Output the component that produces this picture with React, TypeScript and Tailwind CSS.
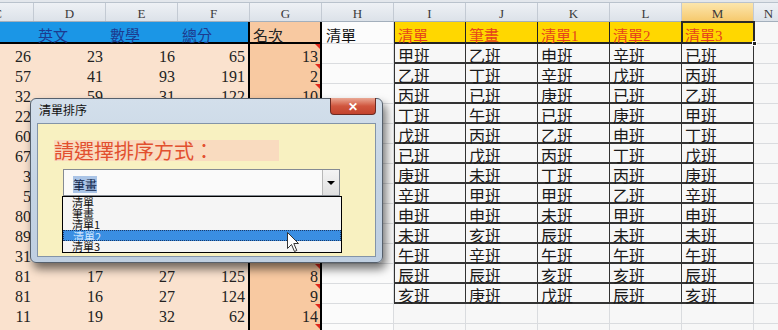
import React from "react";

const COLS = ["C", "D", "E", "F", "G", "H", "I", "J", "K", "L", "M", "N"];

// C, D, E, F(總分), G(名次); null = hidden under the dialog
const scores: (number | null)[][] = [
  [26, 23, 16, 65, 13],
  [57, 41, 93, 191, 2],
  [32, 59, 31, 122, 10],
  [22, null, null, null, null],
  [60, null, null, null, null],
  [67, null, null, null, null],
  [3, null, null, null, null],
  [5, null, null, null, null],
  [80, null, null, null, null],
  [89, null, null, null, null],
  [31, null, null, null, null],
  [81, 17, 27, 125, 8],
  [81, 16, 27, 124, 9],
  [11, 19, 32, 62, 14],
];

const lists: string[][] = [
  ["甲班", "乙班", "申班", "辛班", "已班"],
  ["乙班", "丁班", "辛班", "戊班", "丙班"],
  ["丙班", "已班", "庚班", "已班", "乙班"],
  ["丁班", "午班", "已班", "庚班", "甲班"],
  ["戊班", "丙班", "乙班", "申班", "丁班"],
  ["已班", "戊班", "丙班", "丁班", "戊班"],
  ["庚班", "未班", "丁班", "丙班", "庚班"],
  ["辛班", "甲班", "甲班", "乙班", "辛班"],
  ["申班", "申班", "未班", "甲班", "申班"],
  ["未班", "亥班", "辰班", "未班", "未班"],
  ["午班", "辛班", "午班", "午班", "午班"],
  ["辰班", "辰班", "亥班", "亥班", "辰班"],
  ["亥班", "庚班", "戊班", "辰班", "亥班"],
];

const listHeads = ["清單", "筆畫", "清單1", "清單2", "清單3"];
const options = ["清單", "筆畫", "清單1", "清單2", "清單3"];

function ColumnHeader() {
  return (
    <div className="flex h-[19px] border-b border-[#a3afbc]">
      {COLS.map((c) => (
        <div
          key={c}
          className={`shrink-0 border-r border-[#c3cad3] text-center text-[13px] leading-[22px] text-[#3a3a3a] ${
            c === "N" ? "w-[30px]" : "w-[72px]"
          } ${c === "M" ? "bg-gradient-to-b from-[#fce6ac] to-[#f6c96c]" : "bg-gradient-to-b from-[#eef1f5] to-[#dce2e9]"}`}
        >
          {c}
        </div>
      ))}
      <div className="w-[72px] shrink-0 bg-gradient-to-b from-[#eef1f5] to-[#dce2e9]" />
    </div>
  );
}

function TitleRow() {
  return (
    <div className="flex h-[22px] text-[15px] leading-[28px]">
      <div className="w-[72px] shrink-0 border-b-2 border-black bg-[#1b96e6]" />
      {["英文", "數學", "總分"].map((t, i) => (
        <div
          key={t}
          className={`w-[72px] shrink-0 border-b-2 border-black bg-[#1b96e6] pl-[4px] text-[#1d3b8f] ${i === 2 ? "border-r-2" : ""}`}
        >
          {t}
        </div>
      ))}
      <div className="w-[72px] shrink-0 border-b-2 border-r-2 border-black bg-[#f8c9a1] pl-[3px] text-[#222]">名次</div>
      <div className="w-[72px] shrink-0 border-b border-r border-[#dadcdf] bg-[#fcfcfc] pl-[4px] text-[#111]">清單</div>
      {listHeads.map((t, i) => (
        <div
          key={t}
          className={`relative w-[72px] shrink-0 border-b-2 border-r border-[#222] bg-[#ffd700] pl-[3px] text-[#e5441c] ${i === 0 ? "border-l" : ""}`}
        >
          {t}
          {i === 4 && (
            <div className="absolute -left-px -top-px -right-[2px] -bottom-[2px] border-2 border-[#2a2a2a]">
              <div className="absolute -right-[4px] -bottom-[4px] h-[5px] w-[5px] border border-white bg-[#222]" />
            </div>
          )}
        </div>
      ))}
      <div className="w-[30px] shrink-0 border-b border-r border-[#dadcdf]" />
      <div className="w-[72px] shrink-0 border-b border-[#dadcdf]" />
    </div>
  );
}

function DataRow({ idx }: { idx: number }) {
  const s = scores[idx];
  const l = lists[idx];
  return (
    <div className="flex h-[20px] text-[16px] leading-[26px]">
      {[0, 1, 2, 3].map((k) => (
        <div
          key={k}
          className={`w-[72px] shrink-0 bg-[#fae2ce] pr-[3px] text-right text-[#222] ${k === 3 ? "border-r-2 border-black" : ""}`}
        >
          {s && s[k] !== null ? s[k] : ""}
        </div>
      ))}
      <div className="relative w-[72px] shrink-0 border-r-2 border-black bg-[#f8c9a1] pr-[2px] text-right text-[#222]">
        {s && s[4] !== null ? s[4] : ""}
        <span className="absolute right-0 top-0 h-0 w-0 border-l-[5px] border-t-[5px] border-l-transparent border-t-[#e0281c]" />
      </div>
      <div className="w-[72px] shrink-0 border-b border-r border-[#dadcdf] bg-[#fbfbfb]" />
      {[0, 1, 2, 3, 4].map((k) =>
        l ? (
          <div
            key={k}
            className={`w-[72px] shrink-0 border-b-2 border-r border-[#333] pl-[3px] text-[#1a1a1a] ${k === 0 ? "border-l" : ""}`}
          >
            {l[k]}
          </div>
        ) : (
          <div key={k} className="w-[72px] shrink-0 border-b border-r border-[#dadcdf]" />
        )
      )}
      <div className="w-[30px] shrink-0 border-b border-r border-[#dadcdf]" />
      <div className="w-[72px] shrink-0 border-b border-[#dadcdf]" />
    </div>
  );
}

function SortDialog() {
  return (
    <div className="absolute left-[30px] top-[98px] flex h-[165px] w-[353px] flex-col rounded-[6px] border border-[#56606c] bg-gradient-to-b from-[#d3dfeb] via-[#c5d4e4] to-[#bfcfe1] px-[6px] pb-[5px] shadow-[3px_6px_10px_rgba(0,0,0,0.55)] font-['Noto_Sans_CJK_TC',sans-serif]">
      <div className="flex h-[24px] items-start justify-between">
        <span className="pl-[2px] pt-[3px] text-[12px] leading-[16px] text-[#111]">清單排序</span>
        <div className="-mt-px flex h-[17px] w-[46px] items-center justify-center rounded-b-[4px] border border-t-0 border-[#6b2a22] bg-gradient-to-b from-[#e9a895] via-[#d0563e] to-[#c3432d] text-[12px] font-bold leading-none text-white">
          ✕
        </div>
      </div>
      <div className="flex flex-1 flex-col border border-[#8394a8] bg-[#f8f1c1] pl-[16px] pt-[16px]">
        <div className="h-[21px] w-[225px] bg-[#f9dbbf] text-[20px] leading-[21px] text-[#e2502f]">
          請選擇排序方式：
        </div>
        <div className="ml-[9px] mt-[8px] flex h-[27px] w-[277px] border border-[#858b93] bg-[#fafafa]">
          <div className="flex-1 pl-[9px] pt-[1px]">
            <span className="bg-[#aac4e6] text-[12px] leading-[13px] text-[#0f1f4a]">筆畫</span>
          </div>
          <div className="flex w-[17px] items-center justify-center border-l border-[#b8b8b8] bg-gradient-to-b from-[#f4f4f4] to-[#e0e0e0]">
            <span className="h-0 w-0 border-l-[4px] border-r-[4px] border-t-[4px] border-l-transparent border-r-transparent border-t-black" />
          </div>
        </div>
        <div className="ml-[8px] h-[57px] w-[280px] border border-black bg-[#f5f5f5]">
          {options.map((o, i) => (
            <div
              key={o}
              className={`h-[11px] overflow-hidden pl-[9px] text-[11px] leading-[11px] ${
                i === 3 ? "border border-dotted border-[#1a3a6a] bg-[#3a8ee2] text-[#d3e8ff]" : "text-[#111]"
              }`}
            >
              {o}
            </div>
          ))}
        </div>
      </div>
    </div>
  );
}

function Cursor() {
  return (
    <svg className="absolute left-[287px] top-[232px]" width="13" height="21" viewBox="0 0 13 21">
      <path d="M0.5 0.5 L0.5 16.5 L4.5 12.5 L7.5 19.5 L9.8 18.5 L6.8 11.5 L11.5 11.5 Z" fill="#fff" stroke="#333" strokeWidth="1" />
    </svg>
  );
}

export default function App() {
  return (
    <div className="relative h-[330px] w-[778px] overflow-hidden bg-[#f7f7f7] font-['Liberation_Serif','Noto_Sans_CJK_TC',serif]">
      <div className="h-[3px] border-b border-[#b9c2cc] bg-[#e3e7ec]" />
      <div className="-ml-[38px]">
        <ColumnHeader />
        <TitleRow />
        {Array.from({ length: 15 }, (_, i) => (
          <DataRow key={i} idx={i} />
        ))}
      </div>
      <SortDialog />
      <Cursor />
    </div>
  );
}
